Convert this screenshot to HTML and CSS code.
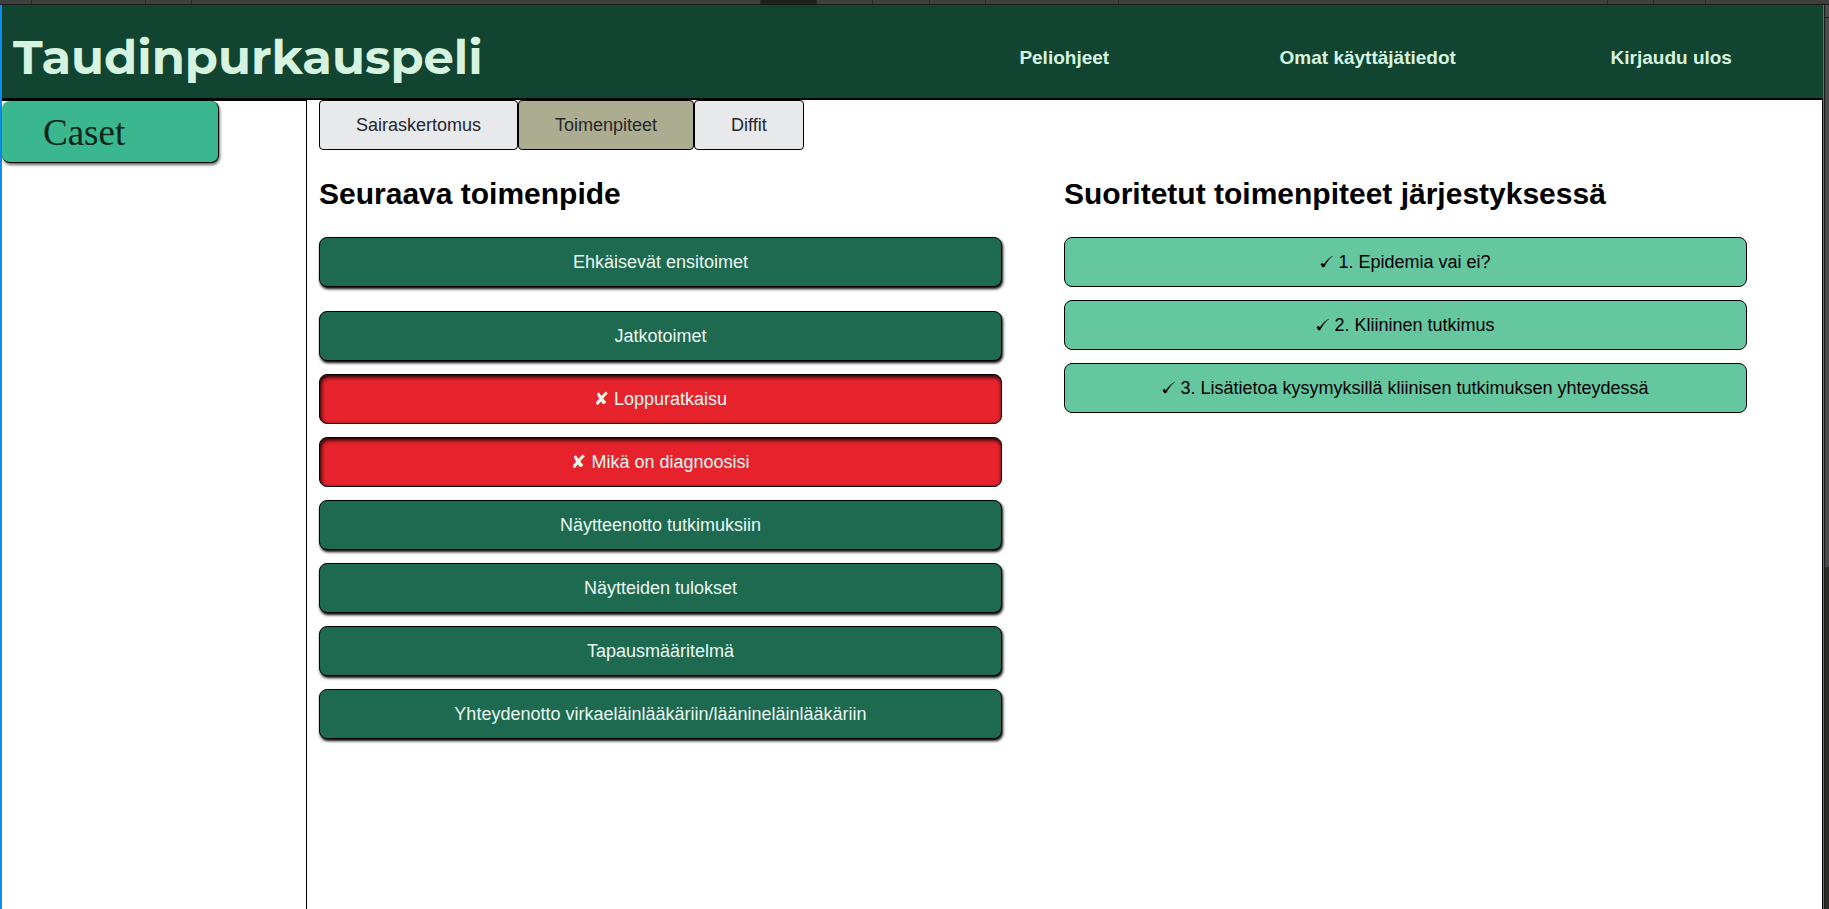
FILE: index.html
```html
<!DOCTYPE html>
<html lang="fi">
<head>
<meta charset="utf-8">
<title>Taudinpurkauspeli</title>
<link rel="stylesheet" href="styles.css">
</head>
<body>
<div class="strip" aria-hidden="true">
  <span style="width:32px"></span><span style="width:114px"></span><span style="width:46px"></span><span style="width:569px"></span><span class="selected" style="width:56px"></span><span style="width:56px"></span><span style="width:57px"></span><span style="width:56px"></span><span style="width:133px"></span><span style="width:489px"></span><span style="width:46px"></span><span style="width:52px"></span>
</div>
<div class="window">
  <div class="page">
    <header class="header">
      <h1 class="brand">Taudinpurkauspeli</h1>
      <nav class="nav">
        <a href="#">Peliohjeet</a>
        <a href="#">Omat käyttäjätiedot</a>
        <a href="#">Kirjaudu ulos</a>
      </nav>
    </header>
    <div class="body">
      <aside class="sidebar"><button class="caset" type="button">Caset</button></aside>
      <main class="main">
        <div class="tabs">
          <button class="tab" type="button">Sairaskertomus</button>
          <button class="tab active" type="button">Toimenpiteet</button>
          <button class="tab" type="button">Diffit</button>
        </div>
        <div class="columns">
          <section>
            <h2>Seuraava toimenpide</h2>
            <div class="list">
              <button class="action first" type="button">Ehkäisevät ensitoimet</button>
              <button class="action" type="button">Jatkotoimet</button>
              <button class="action wrong" type="button">✘ Loppuratkaisu</button>
              <button class="action wrong" type="button">✘ Mikä on diagnoosisi</button>
              <button class="action" type="button">Näytteenotto tutkimuksiin</button>
              <button class="action" type="button">Näytteiden tulokset</button>
              <button class="action" type="button">Tapausmääritelmä</button>
              <button class="action" type="button">Yhteydenotto virkaeläinlääkäriin/läänineläinlääkäriin</button>
            </div>
          </section>
          <section>
            <h2>Suoritetut toimenpiteet järjestyksessä</h2>
            <div class="list">
              <button class="action done" type="button"><svg class="tick" viewBox="0 0 12 12" aria-hidden="true"><path d="M0.5 8.6 2.4 7.2 3.4 8.8C5.6 5.4 8.2 2.3 11.8 0.6L12 1C8.4 3.8 6 6.900 3.800 11.400L2.200 11.400Z"/></svg>1. Epidemia vai ei?</button>
              <button class="action done" type="button"><svg class="tick" viewBox="0 0 12 12" aria-hidden="true"><path d="M0.5 8.6 2.4 7.2 3.4 8.8C5.6 5.4 8.2 2.3 11.8 0.6L12 1C8.4 3.8 6 6.900 3.800 11.400L2.200 11.400Z"/></svg>2. Kliininen tutkimus</button>
              <button class="action done" type="button"><svg class="tick" viewBox="0 0 12 12" aria-hidden="true"><path d="M0.5 8.6 2.4 7.2 3.4 8.8C5.6 5.4 8.2 2.3 11.8 0.6L12 1C8.4 3.8 6 6.900 3.800 11.400L2.200 11.400Z"/></svg>3. Lisätietoa kysymyksillä kliinisen tutkimuksen yhteydessä</button>
            </div>
          </section>
        </div>
      </main>
    </div>
  </div>
  <div class="scroll" aria-hidden="true">
    <div class="scroll-up"></div>
    <div class="scroll-thumb"></div>
    <div class="scroll-track"></div>
  </div>
</div>
</body>
</html>
```

FILE: styles.css
```css
* { box-sizing: border-box; }
body {
  margin: 0;
  min-height: 100vh;
  display: flex;
  flex-direction: column;
  font-family: "Liberation Sans", Arial, sans-serif;
  background: #fff;
  color: #000;
}
button { font: inherit; margin: 0; cursor: pointer; }

.strip {
  display: flex;
  height: 5px;
  flex: none;
  background: #3f3f3f;
  border-bottom: 1px solid #1b1b1b;
  overflow: hidden;
}
.strip span { flex: none; border-right: 1px solid #2a2a2a; }
.strip .selected { background: #202020; }

.window { flex: 1; display: flex; }
.page {
  flex: 1;
  display: flex;
  flex-direction: column;
  border-left: 2px solid #0a8df2;
}

.header {
  display: grid;
  grid-template-columns: 1fr 1fr;
  align-items: center;
  height: 95px;
  background: #124432;
  border-bottom: 2px solid #000;
}
.brand {
  margin: 10px 0 0 11px;
  font-family: Montserrat, Inter, sans-serif;
  font-size: 48px;
  line-height: 60px;
  font-weight: 700;
  color: #d5f3df;
}
.nav {
  display: grid;
  grid-template-columns: repeat(3, 1fr);
  padding-top: 12px;
  text-align: center;
}
.nav a {
  color: #d5f3df;
  font-size: 19px;
  line-height: 24px;
  font-weight: 700;
  text-decoration: none;
}

.body { flex: 1; display: flex; border-right: 1px solid #000; }
.sidebar {
  flex: 0 0 305px;
  border-top: 1px solid #000;
  border-right: 1px solid #000;
}
.caset {
  display: block;
  width: 217px;
  height: 62px;
  padding: 2px 0 0 41px;
  text-align: left;
  font-family: "Liberation Serif", "Times New Roman", serif;
  font-size: 37px;
  color: #0a261b;
  background: #3ab78e;
  border: 1px solid #000;
  border-width: 0 1px 1px 0;
  border-radius: 8px;
  box-shadow: 1px 2px 3px rgba(0, 0, 0, .6);
}

.main { flex: 1; padding: 0 13px 0 12px; }
.tabs { display: flex; }
.tab {
  height: 50px;
  padding: 0 36px;
  font-size: 18px;
  color: #24272b;
  background: #e8e9eb;
  border: 1px solid #000;
  border-radius: 4px;
}
.tab.active { background: #acac91; }

.columns { display: grid; grid-template-columns: 1fr 1fr; }
h2 {
  margin: 26px 0;
  font-size: 30px;
  line-height: 35px;
  font-weight: 700;
}
.list {
  display: flex;
  flex-direction: column;
  gap: 13px;
  padding-right: 62px;
}
.action {
  min-height: 50px;
  padding: 0 12px;
  font-size: 18px;
  color: #e9f7f0;
  background: #1e6a50;
  border: 1px solid #000;
  border-radius: 8px;
  box-shadow: 1px 2px 3px #000;
}
.action.first { margin-bottom: 11px; }
.action.wrong {
  background: #e6232d;
  box-shadow: inset 1px 2px 4px #000;
}
.action.done {
  color: #000;
  background: #65c7a0;
  box-shadow: none;
}
.tick { width: 13px; height: 13px; margin-right: 5px; }

.scroll {
  flex: 0 0 6px;
  display: flex;
  flex-direction: column;
  background: #2b2b28;
  border-left: 1px solid #6b6b6b;
}
.scroll-up {
  height: 13px;
  background: #4b4b4b;
  border-left: 1px solid #1b1b1b;
  border-bottom: 1px solid #1b1b1b;
}
.scroll-thumb { flex: 549 0 0; background: #4b4b4b; border-left: 1px solid #1b1b1b; }
.scroll-track { flex: 342 0 0; border-left: 1px solid #1b1b1b; }
```
